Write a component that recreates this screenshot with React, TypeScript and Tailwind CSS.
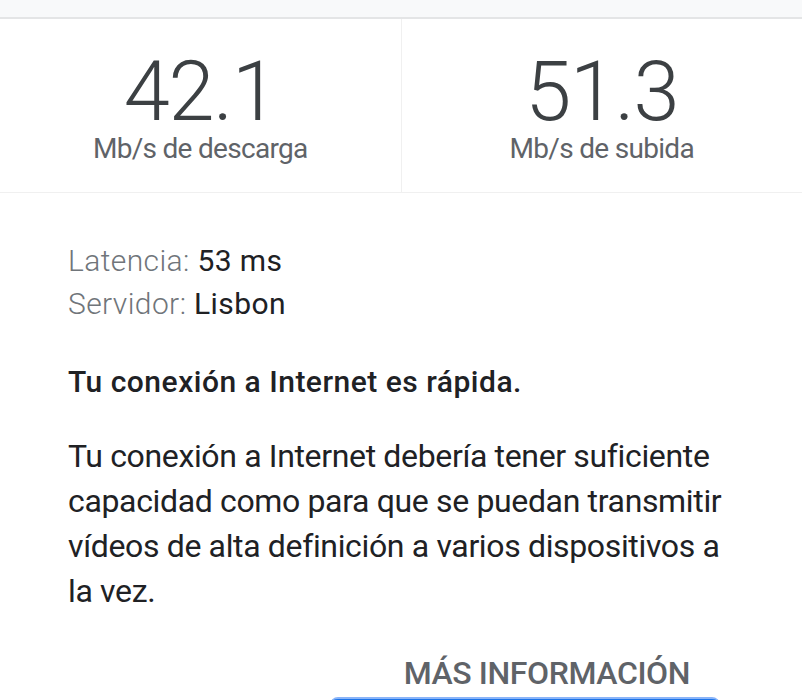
import React from "react";

const Stat = ({ value, label, last }: { value: string; label: string; last?: boolean }) => (
  <div
    className={
      "flex-1 h-[174px] flex flex-col items-center pt-[33px] border-b border-[#f0f0f0] " +
      (last ? "" : "border-r")
    }
  >
    <div className="text-[83px] leading-[80px] font-light tracking-[-1.2px] text-[#3c4043]">{value}</div>
    <div className="mt-[1px] text-[28px] leading-[32px] font-normal tracking-[-0.7px] text-[#5f6368]">
      {label}
    </div>
  </div>
);

export default function App() {
  return (
    <div className="w-[802px] h-[700px] overflow-hidden bg-white font-['Roboto',sans-serif]">
      {/* top bar */}
      <div className="h-[19px] bg-[#f8f9fa] border-b-2 border-[#e4e5e6]" />

      {/* results */}
      <div className="flex">
        <Stat value="42.1" label="Mb/s de descarga" />
        <Stat value="51.3" label="Mb/s de subida" last />
      </div>

      {/* details */}
      <div className="pl-[68px] pr-[64px] pt-[46px]">
        <div className="text-[30px] leading-[43px] tracking-[0.4px] text-[#202124]">
          <div>
            <span className="font-light text-[#70757a]">Latencia: </span>53 ms
          </div>
          <div>
            <span className="font-light text-[#70757a]">Servidor: </span>Lisbon
          </div>
        </div>

        <p className="mt-[35px] text-[30px] leading-[43px] font-medium tracking-[0.5px] text-[#202124]">
          Tu conexión a Internet es rápida.
        </p>

        <p className="mt-[31px] text-[32px] leading-[45px] tracking-[-0.35px] text-[#202124]">
          Tu conexión a Internet debería tener suficiente capacidad como para que se puedan transmitir
          vídeos de alta definición a varios dispositivos a la vez.
        </p>

        <div className="mt-[39px] flex justify-end pr-[48px]">
          <button className="text-[32px] leading-[40px] font-medium tracking-[-0.4px] text-[#5f6368]">
            MÁS INFORMACIÓN
          </button>
        </div>

        <div className="mt-[4px] ml-[262px] w-[390px] h-[48px] rounded-t-[8px] bg-[#1a73e8] border-t-2 border-[#8ab4f8]" />
      </div>
    </div>
  );
}
